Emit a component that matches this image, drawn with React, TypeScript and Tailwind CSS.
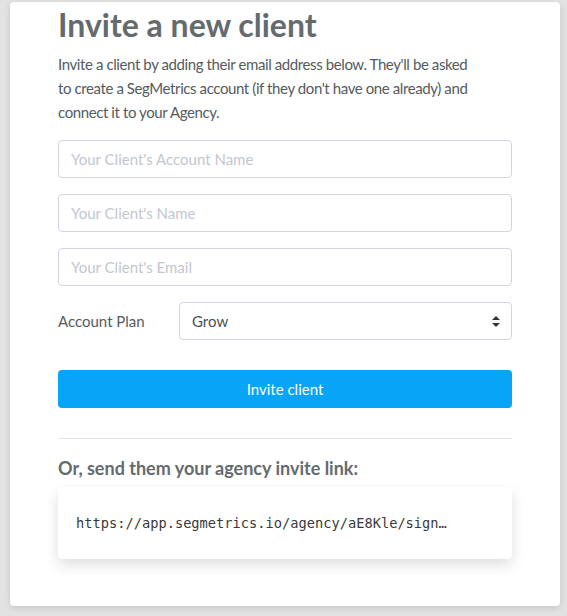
import React from "react";

export default function App() {
  const inputCls =
    "block w-full h-[38px] rounded-[4px] border border-[#d4d4e0] bg-white px-3 text-[15px] text-[#495057] placeholder:text-[#c3c6d1] outline-none";
  return (
    <div
      className="w-[567px] h-[616px] bg-[#e2e2e2] pt-[2px] pl-[10px] pr-[7px] overflow-hidden"
      style={{ fontFamily: "Lato, 'Open Sans', sans-serif" }}
    >
      <div className="bg-white rounded-[4px] shadow-[0_2px_6px_rgba(0,0,0,0.12)] px-[48px] pb-[47px] pt-[3px]">
        <h1 className="text-[32px] leading-[40px] font-bold text-[#646b6f]">
          Invite a new client
        </h1>
        <p className="mt-[7px] w-[418px] text-[15px] leading-[24px] tracking-[-0.4px] text-[#555b60]">
          Invite a client by adding their email address below. They'll be asked to create a SegMetrics account (if they don't have one already) and connect it to your Agency.
        </p>
        <div className="mt-[16px] flex flex-col gap-[16px]">
          <input className={inputCls} placeholder="Your Client's Account Name" />
          <input className={inputCls} placeholder="Your Client's Name" />
          <input className={inputCls} placeholder="Your Client's Email" />
          <div className="flex items-center">
            <label className="w-[121px] text-[15px] text-[#555b60]">Account Plan</label>
            <div className="relative flex-1">
              <div className="h-[38px] rounded-[4px] border border-[#d4d4e0] bg-white px-3 flex items-center text-[15px] text-[#495057]">
                Grow
              </div>
              <svg
                className="absolute right-[12px] top-[14px]"
                width="8"
                height="11"
                viewBox="0 0 8 11"
              >
                <path d="M4 0 L8 4 L0 4 Z" fill="#333" />
                <path d="M0 7 L8 7 L4 11 Z" fill="#333" />
              </svg>
            </div>
          </div>
        </div>
        <button className="mt-[30px] w-full h-[38px] rounded-[4px] bg-[#08a4f8] text-white text-[15px]">
          Invite client
        </button>
        <div className="mt-[30px] border-t border-[#e5e5e5]" />
        <h3 className="mt-[17px] text-[18px] leading-[24px] font-bold text-[#646b6f]">
          Or, send them your agency invite link:
        </h3>
        <div className="mt-[7px] h-[72px] rounded-[4px] bg-white shadow-[0_6px_14px_rgba(0,0,0,0.13)] flex items-center px-[18px]">
          <span
            className="text-[13.7px] text-[#3a3a3a] whitespace-nowrap"
            style={{ fontFamily: "'DejaVu Sans Mono', 'Liberation Mono', monospace" }}
          >
            https://app.segmetrics.io/agency/aE8Kle/sign…
          </span>
        </div>
      </div>
    </div>
  );
}
